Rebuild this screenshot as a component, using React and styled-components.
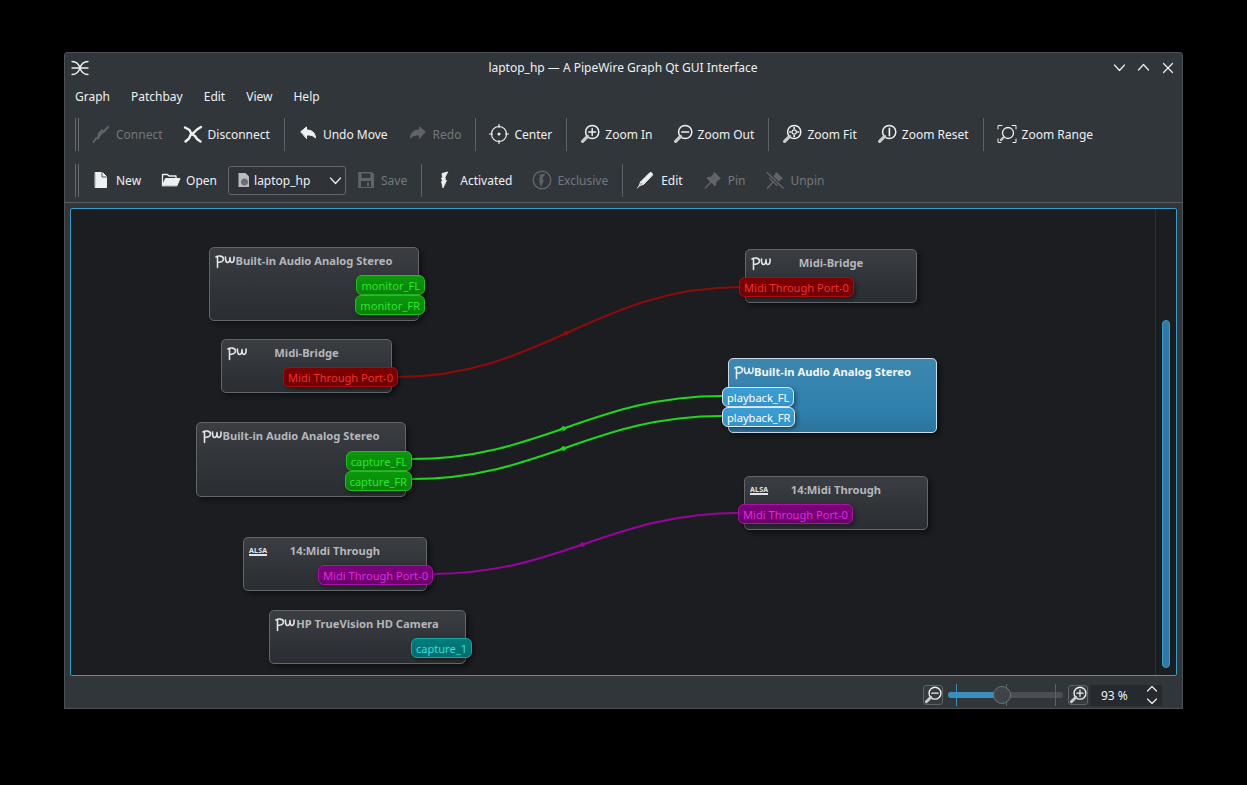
import React from "react"
import styled, { createGlobalStyle, css } from "styled-components"

const GlobalStyle = createGlobalStyle`
  html, body {
    margin: 0;
    background: #000;
    font-family: "Noto Sans", "Open Sans", sans-serif;
    font-size: 12px;
    color: #eff0f1;
  }
`

const Window = styled.div`
  width: 1119px;
  height: 657px;
  margin: 52px 0 0 64px;
  box-sizing: border-box;
  display: flex;
  flex-direction: column;
  background: #31363b;
  border: 1px solid #4d5054;
  border-radius: 3px 3px 0 0;
`
const TitleBar = styled.div`
  height: 30px;
  flex: none;
  display: grid;
  grid-template-columns: 1fr auto 1fr;
  align-items: center;
  padding: 0 7px 0 6px;
`
const Title = styled.div`
  line-height: 28px;
`
const WindowButtons = styled.div`
  display: flex;
  justify-content: flex-end;
  gap: 11px;
  color: #eff0f1;
`
const MenuBar = styled.div`
  height: 27px;
  flex: none;
  display: flex;
  align-items: center;
  gap: 21px;
  padding: 0 10px;
`
const Toolbar = styled.div`
  height: ${(p) => p.$height}px;
  flex: none;
  display: flex;
  align-items: center;
  padding: 1px 0 0 10px;
  box-sizing: border-box;
  ${(p) => p.$last && css`border-bottom: 1px solid #5a5e62;`}
`
const Handle = styled.div`
  width: 1px;
  height: 33px;
  margin-right: 2px;
  border-left: 1px solid #666a6e;
  border-right: 1px solid #666a6e;
  padding-left: 1px;
`
const ToolSep = styled.div`
  width: 1px;
  height: 33px;
  margin: 0 3px 0 4px;
  background: #5e6266;
`
const ToolItem = styled.div`
  display: flex;
  align-items: center;
  gap: 5px;
  padding: 0 10px;
  white-space: nowrap;
  color: ${(p) => (p.$disabled ? "#73777b" : "#eff0f1")};
  svg {
    flex: none;
    opacity: ${(p) => (p.$disabled ? 0.72 : 1)};
  }
`
const Combo = styled.div`
  width: 118px;
  height: 29px;
  margin-left: 1px;
  box-sizing: border-box;
  display: flex;
  align-items: center;
  gap: 2px;
  padding: 0 3px 0 7px;
  border: 1px solid #62666a;
  border-radius: 3px;
  background: #2f3338;
  span {
    flex: 1;
  }
`

const Canvas = styled.div`
  flex: 1;
  min-height: 0;
  display: flex;
  margin: 5px 5px 0;
  border: 1px solid #3a9ccb;
  border-radius: 2px;
  background: #1b1d20;
`
const Graph = styled.div`
  flex: 1;
  position: relative;
  overflow: hidden;
`
const WireLayer = styled.svg`
  position: absolute;
  inset: 0;
  width: 100%;
  height: 100%;
`
const ScrollLane = styled.div`
  width: 21px;
  box-sizing: border-box;
  border-left: 1px solid #2c3034;
  padding: 111px 6px 7px 6px;
  display: flex;
`
const ScrollThumb = styled.div`
  flex: 1;
  border-radius: 4px;
  background: #2d7ba6;
  border: 1px solid #3a9ccb;
`

const nodeBg = css`
  background: ${(p) =>
    p.$selected
      ? "linear-gradient(180deg, #3c87b0 0%, #2f80ad 70%, #2b739c 100%)"
      : "linear-gradient(180deg, #3a3d42 0%, #2f3237 65%, #2a2d31 100%)"};
`
const Node = styled.div`
  position: absolute;
  left: ${(p) => p.$x - 71}px;
  top: ${(p) => p.$y - 209}px;
  width: ${(p) => p.$w}px;
  height: ${(p) => p.$h}px;
  box-sizing: border-box;
  display: flex;
  flex-direction: column;
  border: 1px solid ${(p) => (p.$selected ? "#c8dbe6" : "#63676b")};
  border-radius: 5px;
  box-shadow: 3px 3px 5px rgba(0, 0, 0, 0.45);
  ${nodeBg}
`
const NodeIcon = styled.div`
  position: absolute;
  left: 4px;
  top: 6px;
  color: ${(p) => (p.$selected ? "#e4eef4" : "#e2e4e6")};
`
const AlsaLogo = styled.div`
  position: absolute;
  left: 5px;
  top: 9px;
  width: 18px;
  font-size: 7px;
  line-height: 7px;
  font-weight: 700;
  text-align: center;
  letter-spacing: 0.2px;
  color: #e2e4e6;
  border-bottom: 2px solid #e2e4e6;
`
const NodeTitle = styled.div`
  height: ${(p) => 27 + (p.$extra || 0)}px;
  flex: none;
  box-sizing: border-box;
  padding-bottom: ${(p) => 2 + (p.$extra || 0)}px;
  display: flex;
  align-items: center;
  justify-content: center;
  font-size: 11.2px;
  font-weight: 700;
  white-space: nowrap;
  color: ${(p) => (p.$selected ? "#f4f8fa" : "#b4b7b9")};
`
const PortColumn = styled.div`
  display: flex;
  flex-direction: column;
  align-items: ${(p) => (p.$input ? "flex-start" : "flex-end")};
  margin: ${(p) => (p.$input ? "0 0 0 -7px" : "0 -7px 0 0")};
`
const portColors = {
  green: ["#0c980c", "#0a820a", "#20c020", "#2ee52e"],
  red: ["#800000", "#6e0000", "#a81010", "#f03232"],
  purple: ["#7d007d", "#6b006b", "#a812a8", "#e02ae0"],
  teal: ["#007d7d", "#006b6b", "#12a8a8", "#2ee0e0"],
  blue: ["#3b9fd6", "#3393c9", "#dcebf3", "#ffffff"],
}
const Port = styled.div`
  height: 20px;
  box-sizing: border-box;
  padding: 0 4px;
  display: flex;
  align-items: center;
  white-space: nowrap;
  font-size: 11.1px;
  border-radius: 6px;
  border: 1px solid ${(p) => portColors[p.$color][2]};
  color: ${(p) => portColors[p.$color][3]};
  background: linear-gradient(180deg, ${(p) => portColors[p.$color][0]}, ${(p) => portColors[p.$color][1]});
  box-shadow: 2px 2px 4px rgba(0, 0, 0, 0.4);
`

const StatusBar = styled.div`
  height: 32px;
  flex: none;
  box-sizing: border-box;
  display: flex;
  align-items: center;
  justify-content: flex-end;
  padding: 6px 20px 0 0;
`
const ZoomButton = styled.div`
  width: 20px;
  height: 20px;
  box-sizing: border-box;
  display: flex;
  align-items: center;
  justify-content: center;
  border: 1px solid #5e6266;
  border-radius: 3px;
  background: #363b40;
`
const SliderWrap = styled.div`
  position: relative;
  width: 115px;
  height: 22px;
  margin: 0 5px;
`
const Groove = styled.div`
  position: absolute;
  left: 0;
  right: 0;
  top: 8px;
  height: 6px;
  border-radius: 3px;
  background: #4b4f54;
`
const GrooveFill = styled.div`
  height: 100%;
  border-radius: 3px;
  background: #3a8fbd;
`
const Tick = styled.div`
  position: absolute;
  left: ${(p) => p.$x}px;
  top: 0;
  bottom: 0;
  width: 1px;
  background: ${(p) => (p.$active ? "#3a8fbd" : "#5e6266")};
`
const Thumb = styled.div`
  position: absolute;
  left: 45px;
  top: 2px;
  width: 18px;
  height: 18px;
  box-sizing: border-box;
  border-radius: 50%;
  border: 1px solid #6e7276;
  background: #3f4449;
`
const Spin = styled.div`
  width: 72px;
  height: 21px;
  margin-left: 2px;
  box-sizing: border-box;
  display: flex;
  align-items: center;
  justify-content: space-between;
  padding: 0 4px 0 11px;
  background: #26292d;
`
const SpinArrows = styled.div`
  display: flex;
  flex-direction: column;
`

const Svg = ({ size = 20, w, h, children, ...rest }) => (
  <svg
    width={w || size}
    height={h || size}
    viewBox={`0 0 ${w || size} ${h || size}`}
    fill="none"
    stroke="currentColor"
    strokeLinecap="round"
    strokeLinejoin="round"
    {...rest}
  >
    {children}
  </svg>
)

const Lens = ({ children }) => (
  <Svg>
    <circle cx="12.2" cy="8" r="6.6" strokeWidth="1.5" />
    <path d="M7.6 12.4 2.6 17.4" strokeWidth="3.2" stroke="#c9cbcd" />
    {children}
  </Svg>
)

const icons = {
  connect: (
    <Svg>
      <path d="M2.5 18 5 14.5l2.500-.5 2-5 3.500-1.500 4-4.500" strokeWidth="2" />
      <path d="M7 14 13 7.500 11 5.500 7.500 9z" fill="currentColor" strokeWidth="1" />
    </Svg>
  ),
  disconnect: (
    <Svg>
      <path d="M2 3.500 6.500 6l2 4 3.500 2 2 3 3.500 2.500" strokeWidth="2.400" />
      <path d="M18 3 14 5.500 11 8.500 7.500 11 6 14.500l-3.500 3" strokeWidth="2.400" />
    </Svg>
  ),
  undo: (
    <Svg>
      <path d="M3 7.500 8.500 3v3C13.500 6 17 8 17.500 14 15.500 11.500 13 11 8.500 11v3.200z" fill="currentColor" strokeWidth="1" />
    </Svg>
  ),
  redo: (
    <Svg>
      <path d="M17 7.500 11.500 3v3C6.500 6 3 8 2.500 14 4.500 11.500 7 11 11.500 11v3.200z" fill="currentColor" strokeWidth="1" />
    </Svg>
  ),
  center: (
    <Svg>
      <circle cx="10" cy="10" r="7.500" strokeWidth="1.200" />
      <circle cx="10" cy="10" r="1.500" fill="currentColor" stroke="none" />
      <path d="M10 .5v3M10 16.500v3M.5 10h3M16.500 10h3" strokeWidth="1.200" />
    </Svg>
  ),
  zoomIn: (
    <Lens>
      <path d="M8.700 8h7M12.200 4.500v7" strokeWidth="1.400" />
    </Lens>
  ),
  zoomOut: (
    <Lens>
      <path d="M8.700 8h7" strokeWidth="1.400" />
    </Lens>
  ),
  zoomFit: (
    <Lens>
      <circle cx="12.200" cy="8" r="2.200" strokeWidth="1.200" />
      <path d="M12.200 3.500v1M12.200 11.500v1M7.700 8h1M15.700 8h1" strokeWidth="1.600" />
    </Lens>
  ),
  zoomReset: (
    <Lens>
      <path d="M12.400 4.400v7.200" strokeWidth="1.700" />
    </Lens>
  ),
  zoomRange: (
    <Svg>
      <circle cx="11" cy="9" r="5.500" strokeWidth="1.300" />
      <path d="M7 13 4 16" strokeWidth="2.400" stroke="#c9cbcd" />
      <path d="M1 5V1.500h4M15 1.500h4V5M1 15v3.500h3M16 18.500h3V15" strokeWidth="1" />
    </Svg>
  ),
  file: (
    <Svg>
      <path d="M4.500 2.500h7l4 4v11h-11z" fill="currentColor" strokeWidth="1" />
      <path d="M11 2.500v4.500h4.500" stroke="#31363b" strokeWidth="0.800" />
    </Svg>
  ),
  open: (
    <Svg>
      <path d="M1.500 15.500v-11h5l1.500 1.500h7v2" strokeWidth="1.300" />
      <path d="M1.500 15.500 4.500 8.500h14.500l-3 7z" fill="currentColor" strokeWidth="1" />
    </Svg>
  ),
  config: (
    <Svg size={16}>
      <path d="M2.500 1h7l3.500 3.500V15h-10.500z" fill="#b9bcbf" stroke="none" />
      <circle cx="8.500" cy="10" r="2.800" fill="#6c7074" stroke="#6c7074" strokeDasharray="1 1" strokeWidth="1.500" />
    </Svg>
  ),
  save: (
    <Svg>
      <path d="M2.500 2.500h13.500l1.500 1.500v13.500h-15z" fill="currentColor" strokeWidth="1" />
      <path d="M5.500 3.500h9v4.500h-9z" fill="#31363b" stroke="none" />
      <path d="M5 11h10v6h-10z" fill="#31363b" stroke="none" />
      <path d="M11 12.500h2v3.500h-2z" fill="currentColor" stroke="none" />
    </Svg>
  ),
  bolt: (
    <Svg>
      <path d="M12.500 2 7 3.500l.5 4L6.500 8l1 3-1 .5L8 18l3.500-7.500-1.500.5.500-3-1 .5z" fill="currentColor" strokeWidth="0.800" />
    </Svg>
  ),
  exclusive: (
    <Svg>
      <circle cx="10" cy="10" r="8.800" strokeWidth="1.500" />
      <path d="M12.500 4 8 5l.4 3-1 .4.8 2.400-.8.300L9 16l2.500-5.500-1.200.4.400-2.400-.9.400z" fill="currentColor" strokeWidth="0.600" />
    </Svg>
  ),
  edit: (
    <Svg>
      <path d="M7 14.500 4.500 12 14 2.500c1.200-.5 3 1.200 2.500 2.500z" fill="currentColor" strokeWidth="1" />
      <path d="M4.500 12 3 16l4-1.500" fill="#b5b8bb" strokeWidth="0.800" />
      <path d="M1.500 18 3 16" strokeWidth="1" />
    </Svg>
  ),
  pin: (
    <Svg>
      <path d="M11.500 2.500 17.500 8.500 15.500 9.500 12.500 13c.5 1.500 0 2.500-.5 3L4 8c.5-.5 1.500-1 3-.5l3.500-3z" fill="currentColor" strokeWidth="1" />
      <path d="M7.500 12.500 2.500 18" strokeWidth="1.500" />
    </Svg>
  ),
  unpin: (
    <Svg>
      <path d="M11.500 2.500 17.500 8.500 15.500 9.500 12.500 13c.5 1.500 0 2.500-.5 3L4 8c.5-.5 1.500-1 3-.5l3.500-3z" fill="currentColor" strokeWidth="1" />
      <path d="M7.500 12.500 2.500 18" strokeWidth="1.500" />
      <path d="M2 2.500 18 18" stroke="#31363b" strokeWidth="3.500" />
      <path d="M2 2.500 18 18" strokeWidth="1.500" />
    </Svg>
  ),
}

const PwLogo = () => (
  <Svg w={21} h={15}>
    <path d="M2 3C4 1.500 9.500 1.500 9.500 5 9.500 8 6 8.500 3.500 8M3.500 2.500V13.500" strokeWidth="1.600" />
    <path d="M11.500 3C11.300 6 12 8.500 13.500 8.500S16 6 16 3.500C16 6 16.500 8.500 18 8.500S20.500 6 20 3" strokeWidth="1.600" />
  </Svg>
)

const Chevron = ({ up, size = 13, width = 1.2 }) => (
  <Svg size={size}>
    <path
      d={up ? `M1.500 ${size - 4}L${size / 2} 3.500L${size - 1.500} ${size - 4}` : `M1.500 4L${size / 2} ${size - 3.500}L${size - 1.500} 4`}
      strokeWidth={width}
    />
  </Svg>
)

const row1 = [
  [["Connect", "connect", true], ["Disconnect", "disconnect"]],
  [["Undo Move", "undo"], ["Redo", "redo", true]],
  [["Center", "center"]],
  [["Zoom In", "zoomIn"], ["Zoom Out", "zoomOut"]],
  [["Zoom Fit", "zoomFit"], ["Zoom Reset", "zoomReset"]],
  [["Zoom Range", "zoomRange"]],
]

const nodes = [
  { x: 209, y: 247, w: 210, h: 74, logo: "pw", title: "Built-in Audio Analog Stereo", color: "green", ports: ["monitor_FL", "monitor_FR"] },
  { x: 221, y: 339, w: 171, h: 54, logo: "pw", title: "Midi-Bridge", color: "red", ports: ["Midi Through Port-0"] },
  { x: 196, y: 422, w: 210, h: 75, logo: "pw", title: "Built-in Audio Analog Stereo", color: "green", extra: 1, ports: ["capture_FL", "capture_FR"] },
  { x: 243, y: 537, w: 184, h: 54, logo: "alsa", title: "14:Midi Through", color: "purple", ports: ["Midi Through Port-0"] },
  { x: 269, y: 610, w: 197, h: 54, logo: "pw", title: "HP TrueVision HD Camera", color: "teal", ports: ["capture_1"] },
  { x: 745, y: 249, w: 172, h: 54, logo: "pw", title: "Midi-Bridge", color: "red", input: true, ports: ["Midi Through Port-0"] },
  { x: 728, y: 358, w: 209, h: 75, logo: "pw", title: "Built-in Audio Analog Stereo", color: "blue", input: true, selected: true, extra: 1, ports: ["playback_FL", "playback_FR"] },
  { x: 744, y: 476, w: 184, h: 54, logo: "alsa", title: "14:Midi Through", color: "purple", input: true, ports: ["Midi Through Port-0"] },
]

// wires in window coordinates, shifted by the graph origin when drawn
const wires = [
  { from: [397, 377], to: [741, 287], stroke: "#8f0a0a", width: 2 },
  { from: [411, 459], to: [722, 396], stroke: "#1ed81e", width: 2 },
  { from: [411, 479], to: [722, 416], stroke: "#1ed81e", width: 2 },
  { from: [432, 574], to: [739, 513], stroke: "#96069a", width: 2 },
]

function Wire({ from, to, stroke, width }) {
  const x1 = from[0] - 71
  const y1 = from[1] - 209
  const x2 = to[0] - 71
  const y2 = to[1] - 209
  const dx = (x2 - x1) * 0.42
  const mx = (x1 + x2) / 2 - 3
  const my = (y1 + y2) / 2 + 1
  const angle = (Math.atan2(y2 - y1, x2 - x1) * 180) / Math.PI
  return (
    <g>
      <path d={`M${x1} ${y1}C${x1 + dx} ${y1} ${x2 - dx} ${y2} ${x2} ${y2}`} fill="none" stroke={stroke} strokeWidth={width} />
      <path d="M-4 0L0 -2.500L4 0L0 2.500z" fill={stroke} transform={`translate(${mx} ${my}) rotate(${angle})`} />
    </g>
  )
}

export default function App() {
  return (
    <>
      <GlobalStyle />
      <Window>
        <TitleBar>
          <Svg w={18} h={16}>
            <path d="M1 1.500C6 1.500 8 4.500 9 8 10 4.500 12 1.500 17 1.500M1 14.500C6 14.500 8 11.500 9 8 10 11.500 12 14.500 17 14.500M1 8h16" strokeWidth="1.300" />
          </Svg>
          <Title>laptop_hp — A PipeWire Graph Qt GUI Interface</Title>
          <WindowButtons>
            <Chevron />
            <Chevron up />
            <Svg size={14}>
              <path d="M2.500 2.500l9 9M11.500 2.500l-9 9" strokeWidth="1.200" />
            </Svg>
          </WindowButtons>
        </TitleBar>
        <MenuBar>
          {["Graph", "Patchbay", "Edit", "View", "Help"].map((m) => (
            <div key={m}>{m}</div>
          ))}
        </MenuBar>
        <Toolbar $height={47}>
          <Handle />
          {row1.map((group, i) => (
            <React.Fragment key={i}>
              {i > 0 && <ToolSep />}
              {group.map(([label, icon, disabled]) => (
                <ToolItem key={label} $disabled={disabled}>
                  {icons[icon]}
                  {label}
                </ToolItem>
              ))}
            </React.Fragment>
          ))}
        </Toolbar>
        <Toolbar $height={46} $last>
          <Handle />
          <ToolItem>{icons.file}New</ToolItem>
          <ToolItem>{icons.open}Open</ToolItem>
          <Combo>
            {icons.config}
            <span>laptop_hp</span>
            <Chevron />
          </Combo>
          <ToolItem $disabled>{icons.save}Save</ToolItem>
          <ToolSep />
          <ToolItem>{icons.bolt}Activated</ToolItem>
          <ToolItem $disabled>{icons.exclusive}Exclusive</ToolItem>
          <ToolSep />
          <ToolItem>{icons.edit}Edit</ToolItem>
          <ToolItem $disabled>{icons.pin}Pin</ToolItem>
          <ToolItem $disabled>{icons.unpin}Unpin</ToolItem>
        </Toolbar>
        <Canvas>
          <Graph>
            <WireLayer>
              {wires.map((w, i) => (
                <Wire key={i} {...w} />
              ))}
            </WireLayer>
            {nodes.map((n, i) => (
              <Node key={i} $x={n.x} $y={n.y} $w={n.w} $h={n.h} $selected={n.selected}>
                {n.logo === "pw" ? (
                  <NodeIcon $selected={n.selected}>
                    <PwLogo />
                  </NodeIcon>
                ) : (
                  <AlsaLogo>ALSA</AlsaLogo>
                )}
                <NodeTitle $selected={n.selected} $extra={n.extra}>{n.title}</NodeTitle>
                <PortColumn $input={n.input}>
                  {n.ports.map((p) => (
                    <Port key={p} $color={n.color}>
                      {p}
                    </Port>
                  ))}
                </PortColumn>
              </Node>
            ))}
          </Graph>
          <ScrollLane>
            <ScrollThumb />
          </ScrollLane>
        </Canvas>
        <StatusBar>
          <ZoomButton>{icons.zoomOut}</ZoomButton>
          <SliderWrap>
            <Groove>
              <GrooveFill style={{ width: `${(54 / 115) * 100}%` }} />
            </Groove>
            <Tick $x={8} $active />
            <Tick $x={58} />
            <Tick $x={107} />
            <Thumb />
          </SliderWrap>
          <ZoomButton>{icons.zoomIn}</ZoomButton>
          <Spin>
            <span>93 %</span>
            <SpinArrows>
              <Chevron up size={12} />
              <Chevron size={12} />
            </SpinArrows>
          </Spin>
        </StatusBar>
      </Window>
    </>
  )
}
